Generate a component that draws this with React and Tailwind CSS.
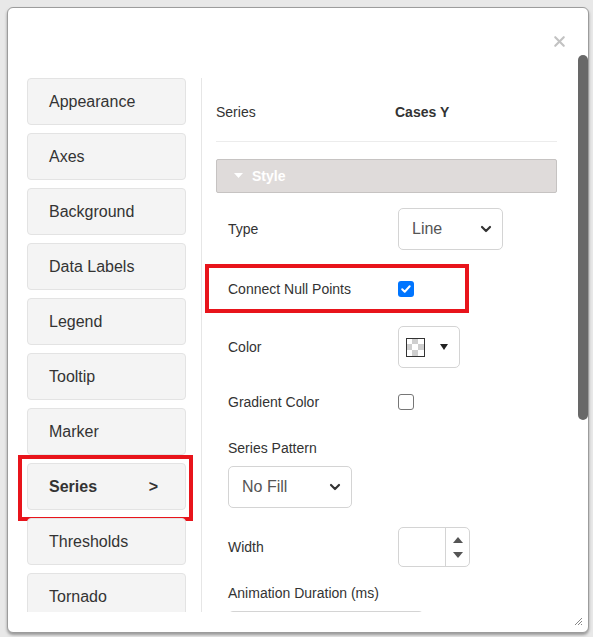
import { ChevronDown, X } from "lucide-react";

const navItems = [
  "Appearance",
  "Axes",
  "Background",
  "Data Labels",
  "Legend",
  "Tooltip",
  "Marker",
  "Series",
  "Thresholds",
  "Tornado",
];

function Checkbox({ checked }) {
  if (checked) {
    return (
      <div className="w-4 h-4 rounded-[3px] bg-[#0075ff] flex items-center justify-center">
        <svg width="12" height="12" viewBox="0 0 12 12">
          <path d="M2.2 6.3l2.5 2.4 5-5.4" fill="none" stroke="#fff" strokeWidth="2" strokeLinecap="round" strokeLinejoin="round" />
        </svg>
      </div>
    );
  }
  return <div className="w-4 h-4 rounded-[3px] border-[1.5px] border-[#767676] bg-white" />;
}

function Select({ value, width }) {
  return (
    <div
      className={`${width} h-[42px] border border-[#d4d4d4] rounded-[5px] bg-white flex items-center justify-between pl-[13px] pr-[8px] text-base text-[#555]`}
    >
      <span>{value}</span>
      <ChevronDown size={16} strokeWidth={3.2} className="text-[#333]" />
    </div>
  );
}

function Row({ label, children, className = "" }) {
  return (
    <div className={`flex items-center shrink-0 pl-3 ${className}`}>
      <div className="w-[170px] text-sm text-[#333]">{label}</div>
      {children}
    </div>
  );
}

export default function App() {
  return (
    <div className="w-[593px] h-[637px] overflow-hidden bg-[#e8e8e8] pt-[7px] pl-[7px] font-['Liberation_Sans',Arial,sans-serif]">
      <div className="w-[582px] h-[626px] bg-white border border-[#9c9c9c] rounded-[6px] shadow-[0_2px_3px_rgba(0,0,0,0.35)] flex relative">
        <div className="flex-1 flex flex-col">
          <div className="h-[70px] flex justify-end pt-[25px] pr-[10px]">
            <X size={17} strokeWidth={3} className="text-[#c2c2c2]" />
          </div>

          <div className="h-[534px] overflow-hidden flex pl-[19px]">
            <div className="w-[159px] flex flex-col gap-2 shrink-0">
              {navItems.map((item) => (
                <div
                  key={item}
                  className={`relative h-[47px] shrink-0 rounded-[4px] border border-[#e3e3e3] bg-[#f4f4f4] flex items-center pl-[21px] pr-[27px] text-base text-[#333] ${
                    item === "Series" ? "font-bold justify-between" : ""
                  }`}
                >
                  <span>{item}</span>
                  {item === "Series" && (
                    <>
                      <span>&gt;</span>
                      <span className="absolute -left-[10px] -right-[8px] -top-[9px] -bottom-[12px] border-4 border-[#e8141b]" />
                    </>
                  )}
                </div>
              ))}
            </div>

            <div className="ml-[15px] border-l border-[#e6e6e6] flex-1 pl-[14px] pr-[21px] flex flex-col">
              <div className="flex items-center shrink-0 h-5 mt-6 text-sm text-[#333]">
                <div className="w-[179px]">Series</div>
                <div className="font-bold">Cases Y</div>
              </div>
              <div className="h-px bg-[#ececec] mt-[19px] shrink-0" />

              <div className="mt-[17px] h-[34px] shrink-0 bg-[#dfdbda] border border-[#c6c3c2] rounded-[2px] flex items-center pl-[17px] text-sm font-bold text-white">
                <svg width="9" height="6" viewBox="0 0 9 6" className="mr-[9px]">
                  <path d="M0 0h9L4.5 5z" fill="#fff" />
                </svg>
                Style
              </div>

              <Row label="Type" className="mt-[15px] h-[41px]">
                <Select value="Line" width="w-[105px]" />
              </Row>

              <div className="relative mt-[15px] h-[49px] shrink-0">
                <Row label="Connect Null Points" className="h-full">
                  <Checkbox checked />
                </Row>
                <span className="absolute -left-[11px] w-[264px] top-0 bottom-0 border-4 border-[#e8141b]" />
              </div>

              <Row label="Color" className="mt-[13px] h-[42px]">
                <div className="w-[62px] h-[42px] border border-[#d4d4d4] rounded-[5px] flex items-center pl-[7px] gap-[15px]">
                  <svg width="19" height="19" viewBox="0 0 19 19">
                    <rect x="0" y="0" width="19" height="19" fill="#fff" />
                    <rect x="6" y="0" width="6" height="6" fill="#cfcfcf" />
                    <rect x="0" y="6" width="6" height="6" fill="#cfcfcf" />
                    <rect x="12" y="6" width="7" height="6" fill="#cfcfcf" />
                    <rect x="6" y="12" width="6" height="7" fill="#cfcfcf" />
                    <rect x="0.5" y="0.5" width="18" height="18" fill="none" stroke="#333" strokeWidth="1" />
                  </svg>
                  <svg width="8" height="6" viewBox="0 0 8 6">
                    <path d="M0 0h8L4 6z" fill="#222" />
                  </svg>
                </div>
              </Row>

              <Row label="Gradient Color" className="mt-5 h-[28px]">
                <Checkbox />
              </Row>

              <div className="mt-[22px] h-5 shrink-0 pl-3 flex items-center text-sm text-[#333]">Series Pattern</div>
              <div className="mt-2 pl-3 shrink-0">
                <Select value="No Fill" width="w-[124px]" />
              </div>

              <Row label="Width" className="mt-[19px] h-10">
                <div className="w-[72px] h-10 border border-[#d4d4d4] rounded-[5px] flex">
                  <div className="w-[47px] border-r border-[#d4d4d4]" />
                  <div className="flex-1 flex flex-col items-center justify-center gap-[9px]">
                    <svg width="10" height="6" viewBox="0 0 10 6">
                      <path d="M0 6h10L5 0z" fill="#555" />
                    </svg>
                    <svg width="10" height="6" viewBox="0 0 10 6">
                      <path d="M0 0h10L5 6z" fill="#555" />
                    </svg>
                  </div>
                </div>
              </Row>

              <div className="mt-4 h-5 shrink-0 pl-3 flex items-center text-sm text-[#333]">Animation Duration (ms)</div>
              <div className="mt-2 pl-3 shrink-0">
                <div className="w-[196px] h-10 border border-[#d4d4d4] rounded-[5px] flex">
                  <div className="w-[172px] border-r border-[#d4d4d4]" />
                </div>
              </div>
            </div>
          </div>
        </div>

        <div className="w-[10px] pt-[47px] shrink-0">
          <div className="h-[365px] rounded-full bg-[#686868]" />
        </div>

        <svg width="9" height="9" viewBox="0 0 9 9" className="absolute right-[5px] bottom-[6px]">
          <path d="M8 1L1 8M8 4L4 8M8 7L7 8" stroke="#888" strokeWidth="1" />
        </svg>
      </div>
    </div>
  );
}
